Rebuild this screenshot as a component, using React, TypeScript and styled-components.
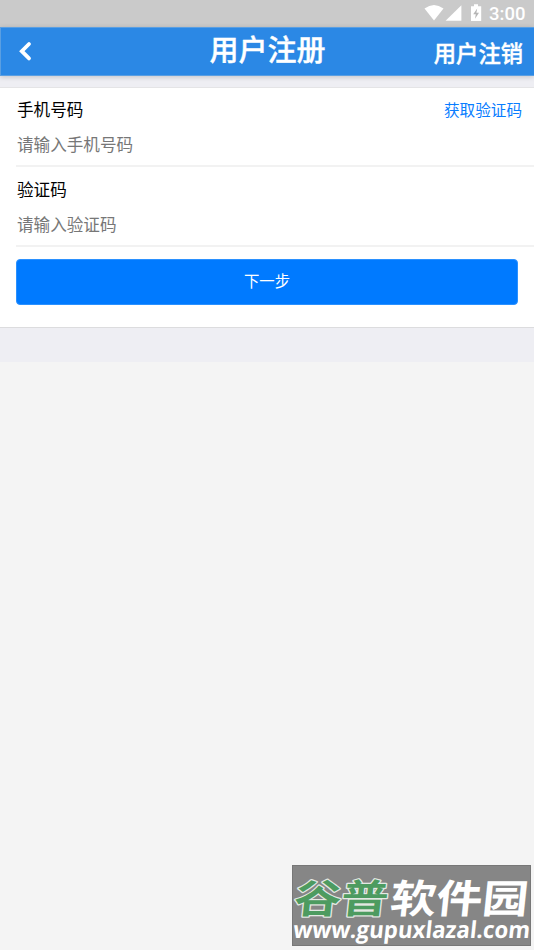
import React from 'react';
import styled, { createGlobalStyle } from 'styled-components';

const GlobalStyle = createGlobalStyle`
  * { box-sizing: border-box; }
  body { margin: 0; background: #f4f4f4; font-family: "Noto Sans CJK SC", "Noto Sans", sans-serif; }
`;

const Screen = styled.div`
  width: 534px;
  height: 950px;
  display: flex;
  flex-direction: column;
  overflow: hidden;
  background: #f4f4f4;
`;

const StatusBar = styled.div`
  height: 27px;
  flex: none;
  display: flex;
  align-items: flex-start;
  justify-content: flex-end;
  padding-right: 9px;
  background: #cacaca;
  color: #fff;
`;

const StatusIcons = styled.svg`
  display: block;
  width: 62px;
  height: 27px;
  margin-right: 3px;
`;

const Clock = styled.span`
  width: 36px;
  font: 500 18.5px/29px Roboto, sans-serif;
  white-space: nowrap;
`;

const Header = styled.header`
  height: 49px;
  flex: none;
  display: grid;
  grid-template-columns: 1fr auto 1fr;
  background: #2b88e5;
  border: solid #5a9fe2;
  border-width: 1px 0 1px 1px;
  box-shadow: 0 1px 5px rgba(0, 0, 0, 0.18);
  color: #fff;
  z-index: 1;
`;

const BackButton = styled.button`
  display: flex;
  width: 48px;
  height: 47px;
  padding: 12px 0 0 15px;
  border: 0;
  background: none;
  color: inherit;
`;

const Title = styled.h1`
  margin: 0;
  font-size: 29px;
  font-weight: 500;
  -webkit-text-stroke: 0.4px #fff;
  line-height: 41px;
`;

const HeaderAction = styled.a`
  justify-self: end;
  padding-right: 11px;
  font-size: 22.3px;
  font-weight: 500;
  -webkit-text-stroke: 0.4px #fff;
  line-height: 49px;
`;

const Content = styled.main`
  height: 286px;
  flex: none;
  padding-top: 11px;
  background: #eeeef3;
`;

const Form = styled.form`
  height: 241px;
  border-top: 1px solid #e4e4e6;
  border-bottom: 1px solid #dcdcde;
  background: #fff;
`;

const Field = styled.div<{ $first?: boolean }>`
  height: ${p => (p.$first ? 79 : 80)}px;
  margin-left: 16px;
  padding: ${p => (p.$first ? 4 : 5)}px 12px 0 1px;
  border-bottom: 2px solid #f2f2f2;
`;

const FieldHead = styled.div`
  height: 35px;
  display: flex;
  justify-content: space-between;
`;

const Label = styled.label`
  font-size: 16.6px;
  line-height: 34px;
  color: #000;
`;

const CodeLink = styled.a`
  font-size: 15.6px;
  line-height: 34px;
  color: #087dff;
`;

const Input = styled.input`
  display: block;
  width: 300px;
  height: 34px;
  padding: 0;
  border: 0;
  outline: 0;
  background: transparent;
  font: 16.6px/34px "Noto Sans CJK SC", sans-serif;
  &::placeholder { color: #777; opacity: 1; }
`;

const NextButton = styled.button`
  display: block;
  width: 502px;
  height: 46px;
  margin: 12px 0 0 16px;
  padding: 0 0 5px;
  border: 1px solid #2b91ff;
  border-radius: 4px;
  background: #007aff;
  color: #fff;
  font: 15.4px/38px "Noto Sans CJK SC", sans-serif;
`;

const Watermark = styled.aside`
  width: 239px;
  height: 81px;
  flex: none;
  align-self: flex-end;
  margin: auto 3px 4px 0;
  background: #868686;
  border: 1px solid #777;
`;

const WatermarkArt = styled.svg`
  display: block;
  width: 237px;
  height: 79px;
  overflow: visible;
`;

export default function App() {
  return (
    <Screen>
      <GlobalStyle />
      <StatusBar>
        <StatusIcons viewBox="0 0 62 27" fill="#fff">
          <path d="M.5 8.6Q10 1.6 19.5 8.6L10 20.6Z" />
          <path d="M21.6 20.8 37.4 5.2V20.8Z" />
          <path d="M47 6.2h3V4.3h4v1.9h3.2V21H47Z" />
          <path d="M53.2 8.4 49.2 14.2h2.6l-.8 4.6 4-6h-2.6Z" fill="#b5b5b5" />
        </StatusIcons>
        <Clock>3:00</Clock>
      </StatusBar>
      <Header>
        <BackButton aria-label="返回">
          <svg width="20" height="22" viewBox="0 0 20 22" fill="none" stroke="#fff" strokeWidth="3.8" strokeLinecap="round">
            <path d="M13 4 5.8 11.2l7.2 7.2" />
          </svg>
        </BackButton>
        <Title>用户注册</Title>
        <HeaderAction>用户注销</HeaderAction>
      </Header>
      <Content>
        <Form>
          <Field $first>
            <FieldHead>
              <Label htmlFor="phone">手机号码</Label>
              <CodeLink>获取验证码</CodeLink>
            </FieldHead>
            <Input id="phone" placeholder="请输入手机号码" />
          </Field>
          <Field>
            <FieldHead>
              <Label htmlFor="code">验证码</Label>
            </FieldHead>
            <Input id="code" placeholder="请输入验证码" />
          </Field>
          <NextButton type="button">下一步</NextButton>
        </Form>
      </Content>
      <Watermark>
        <WatermarkArt viewBox="0 0 237 79">
          <g fontFamily="Noto Sans CJK SC" fontWeight="700" fontSize="39.5" transform="skewX(-6)">
            <text x="5" y="47" textLength="94" lengthAdjust="spacingAndGlyphs" fill="#4d9b60" stroke="#e3e8e3" strokeWidth="2.4" strokeLinejoin="round" paintOrder="stroke">谷普</text>
            <text x="101" y="47" textLength="138" lengthAdjust="spacingAndGlyphs" fill="#fff">软件园</text>
          </g>
          <text x="7" y="72.5" transform="skewX(-6)" textLength="237" lengthAdjust="spacingAndGlyphs" fontFamily="Open Sans" fontWeight="700" fontSize="23.5" fill="#fff">www.gupuxlazal.com</text>
        </WatermarkArt>
      </Watermark>
    </Screen>
  );
}
